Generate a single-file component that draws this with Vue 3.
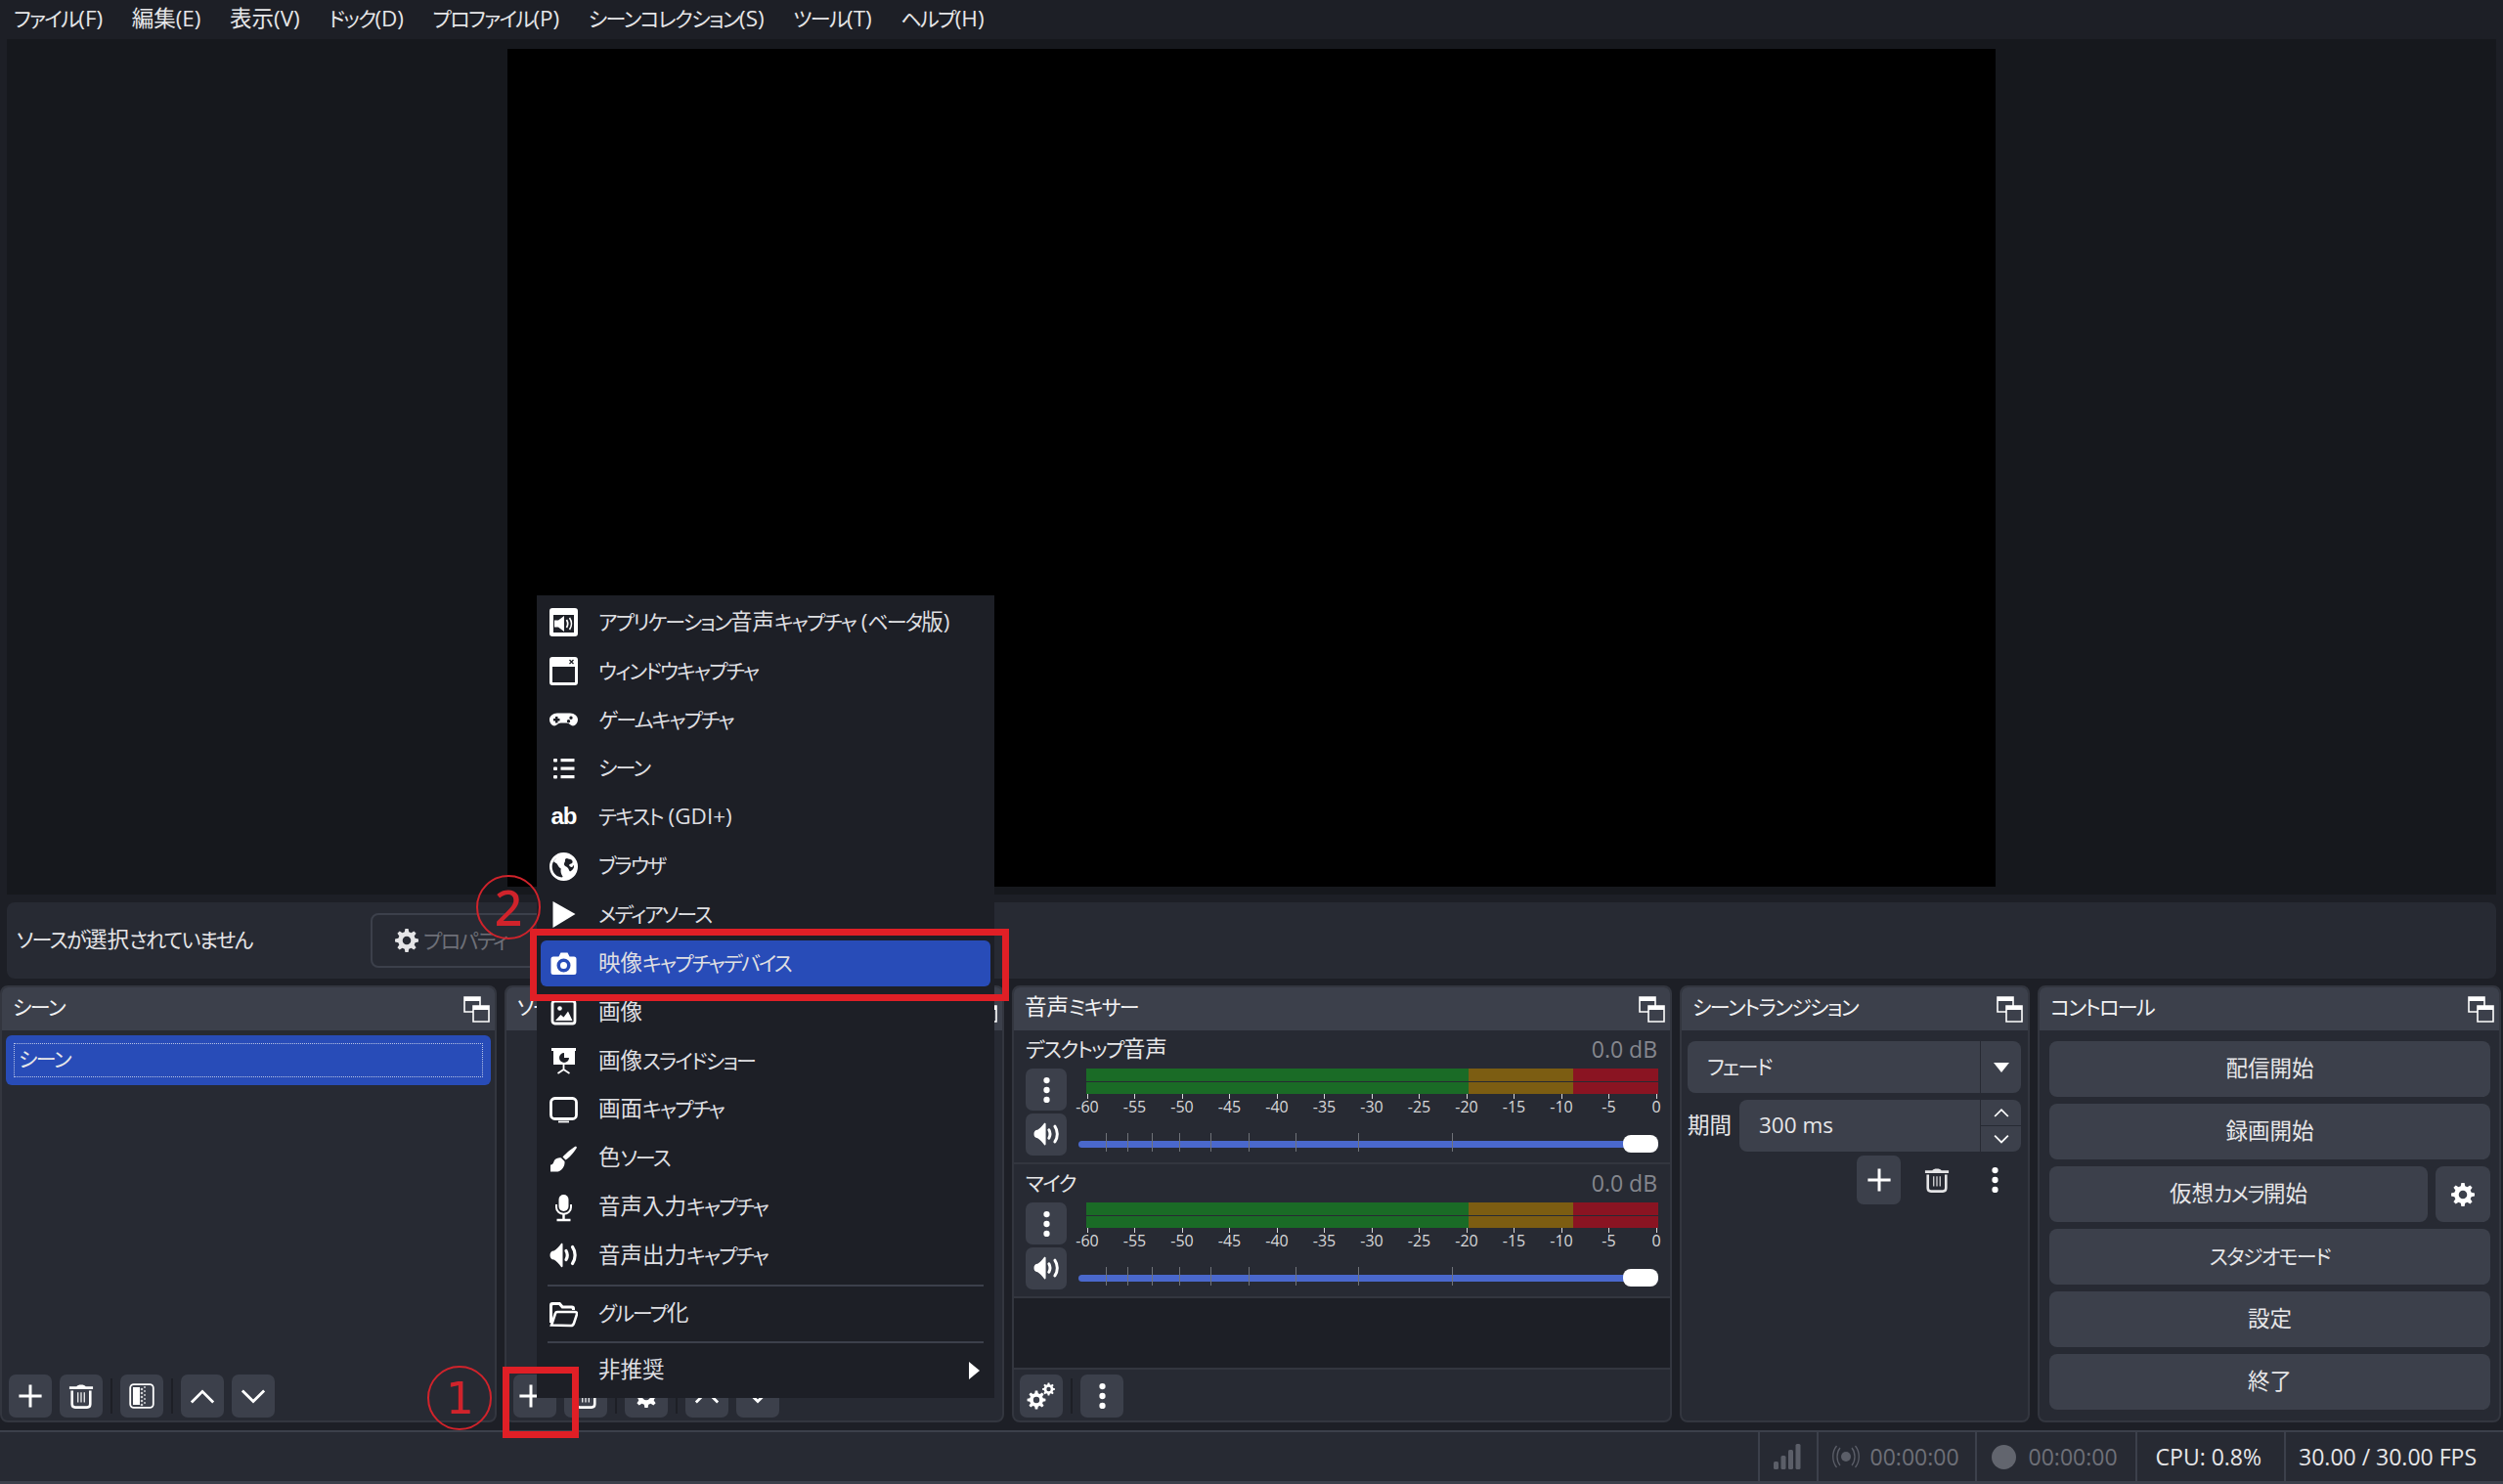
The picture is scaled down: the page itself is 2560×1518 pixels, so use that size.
<script setup>
import { h } from 'vue'

const menuBar = ['ファイル(F)', '編集(E)', '表示(V)', 'ドック(D)', 'プロファイル(P)', 'シーンコレクション(S)', 'ツール(T)', 'ヘルプ(H)']

const sourceItems = [
  { icon: 'appaudio', label: 'アプリケーション音声キャプチャ (ベータ版)' },
  { icon: 'window', label: 'ウィンドウキャプチャ' },
  { icon: 'gamepad', label: 'ゲームキャプチャ' },
  { icon: 'list', label: 'シーン' },
  { icon: 'text', label: 'テキスト (GDI+)' },
  { icon: 'globe', label: 'ブラウザ' },
  { icon: 'play', label: 'メディアソース' },
  { icon: 'camera', label: '映像キャプチャデバイス', active: true },
  { icon: 'image', label: '画像' },
  { icon: 'slides', label: '画像スライドショー' },
  { icon: 'monitor', label: '画面キャプチャ' },
  { icon: 'brush', label: '色ソース' },
  { icon: 'mic', label: '音声入力キャプチャ' },
  { icon: 'speaker', label: '音声出力キャプチャ' }
]

const channels = ['デスクトップ音声', 'マイク']
const scale = ['-60', '-55', '-50', '-45', '-40', '-35', '-30', '-25', '-20', '-15', '-10', '-5', '0']
// volume fader ticks, percent of the track
const faderTicks = [4.7, 8.4, 12.6, 17.4, 22.8, 29.4, 37.5, 48.3, 64.5]

// the reference font has narrow kana, so kana runs get their own span
const KANA = /([\u3040-\u30ff]+)/
const Jp = (props) =>
  props.s.split(KANA).filter(Boolean).map((run) => (KANA.test(run) ? h('span', { class: 'kana' }, run) : run))
Jp.props = ['s']

function gear(cx, cy, ro, ri, hole, teeth = 8) {
  const step = (Math.PI * 2) / teeth
  const pt = (a, r) => `${(cx + Math.cos(a) * r).toFixed(2)} ${(cy + Math.sin(a) * r).toFixed(2)}`
  let d = ''
  for (let i = 0; i < teeth; i++) {
    const a = i * step - Math.PI / 2
    d += `${i ? 'L' : 'M'}${pt(a - step * 0.32, ri)}L${pt(a - step * 0.17, ro)}L${pt(a + step * 0.17, ro)}L${pt(a + step * 0.32, ri)}`
  }
  d += `Z M${cx - hole} ${cy}a${hole} ${hole} 0 1 0 ${hole * 2} 0a${hole} ${hole} 0 1 0 ${-hole * 2} 0Z`
  return d
}
const gearPath = gear(14, 14, 13, 9.6, 4.6)
const gearsPath = gear(10, 18, 9.5, 7, 3.2) + gear(22.5, 7, 6.5, 4.8, 2.2)
</script>

<template>
  <svg class="defs" aria-hidden="true">
    <symbol id="float" viewBox="0 0 27 27">
      <path d="M1 1h16v15H1z" fill="none" stroke="currentColor" stroke-width="1.6" />
      <path d="M1 1h16v4H1z" fill="currentColor" />
      <path d="M10 10h16v16H10z" fill="#3c404b" stroke="currentColor" stroke-width="1.6" />
      <path d="M10 10h16v4H10z" fill="currentColor" />
    </symbol>
    <symbol id="plus" viewBox="0 0 28 28">
      <path d="M14 1.5v25M1.5 14h25" stroke="currentColor" stroke-width="3.2" />
    </symbol>
    <symbol id="trash" viewBox="0 0 28 28">
      <path d="M1 3.5h8c1-2.5 9-2.500 10 0h8v3H1z" fill="currentColor" />
      <path d="M4 8v15c0 2 1.500 3.500 3.500 3.500h13c2 0 3.500-1.500 3.500-3.500V8" fill="none" stroke="currentColor" stroke-width="2.800" />
      <path d="M10.500 10v11M14 10v11M17.500 10v11" stroke="currentColor" stroke-width="1.300" />
    </symbol>
    <symbol id="filter" viewBox="0 0 26 26">
      <rect x="1.200" y="1.200" width="23.600" height="23.600" rx="3.500" fill="none" stroke="currentColor" stroke-width="1.800" />
      <path d="M4 4h7v18H4z" fill="currentColor" />
      <g fill="currentColor" opacity=".75">
        <circle cx="13" cy="6" r="1.300" /><circle cx="13" cy="10" r="1.300" /><circle cx="13" cy="14" r="1.300" /><circle cx="13" cy="18" r="1.300" /><circle cx="13" cy="22" r="1.300" />
        <circle cx="16" cy="4" r="1" /><circle cx="16" cy="8" r="1" /><circle cx="16" cy="12" r="1" /><circle cx="16" cy="16" r="1" /><circle cx="16" cy="20" r="1" />
      </g>
    </symbol>
    <symbol id="up" viewBox="0 0 28 28"><path d="M2 21L14 9l12 12" fill="none" stroke="currentColor" stroke-width="3" /></symbol>
    <symbol id="down" viewBox="0 0 28 28"><path d="M2 8l12 12L26 8" fill="none" stroke="currentColor" stroke-width="3" /></symbol>
    <symbol id="gear" viewBox="0 0 28 28"><path :d="gearPath" fill="currentColor" fill-rule="evenodd" /></symbol>
    <symbol id="gears" viewBox="0 0 30 28"><path :d="gearsPath" fill="currentColor" fill-rule="evenodd" /></symbol>
    <symbol id="dots" viewBox="0 0 10 30">
      <circle cx="5" cy="4" r="3.500" fill="currentColor" /><circle cx="5" cy="15" r="3.500" fill="currentColor" /><circle cx="5" cy="26" r="3.500" fill="currentColor" />
    </symbol>

    <symbol id="appaudio" viewBox="0 0 29 29">
      <path fill="currentColor" fill-rule="evenodd" d="M3 0h23a3 3 0 0 1 3 3v23a3 3 0 0 1-3 3H3a3 3 0 0 1-3-3V3a3 3 0 0 1 3-3zM4 7v18h21V7z" />
      <path fill="currentColor" d="M5 12.500h4l6-4.500v16l-6-4.500H5z" />
      <path d="M17.500 12c1.500 2.500 1.500 5.500 0 8M20.500 10c2.500 3.500 2.500 8.500 0 12" fill="none" stroke="currentColor" stroke-width="1.700" />
    </symbol>
    <symbol id="window" viewBox="0 0 29 29">
      <path fill="currentColor" fill-rule="evenodd" d="M3 0h23a3 3 0 0 1 3 3v23a3 3 0 0 1-3 3H3a3 3 0 0 1-3-3V3a3 3 0 0 1 3-3zM3 10v16h23V10z" />
      <path d="M20.500 3l4 4M24.500 3l-4 4" stroke="#1d1f26" stroke-width="1.300" />
    </symbol>
    <symbol id="gamepad" viewBox="0 0 29 29">
      <path fill="currentColor" fill-rule="evenodd" d="M8 7.500h13c4.500 0 8 3 8 6.500 0 3.500-2.500 6.500-5 6.500s-3.500-3-6.500-3h-6c-3 0-4 3-6.500 3S0 17.500 0 14c0-3.500 3.500-6.500 8-6.500zM6 11v2H4v2.500h2v2h2.500v-2h2V13h-2v-2zM22 10.500a1.700 1.700 0 1 0 0 3.400a1.700 1.700 0 1 0 0-3.400zM19.500 14a1.700 1.700 0 1 0 0 3.400a1.700 1.700 0 1 0 0-3.400z" />
    </symbol>
    <symbol id="list" viewBox="0 0 29 29">
      <g fill="currentColor">
        <rect x="4" y="4" width="4" height="3.500" rx="1" /><rect x="4" y="12.500" width="4" height="3.500" rx="1" /><rect x="4" y="21" width="4" height="3.500" rx="1" />
        <rect x="11.500" y="4" width="14" height="3.200" /><rect x="11.500" y="12.500" width="14" height="3.200" /><rect x="11.500" y="21" width="14" height="3.200" />
      </g>
    </symbol>
    <symbol id="globe" viewBox="0 0 29 29">
      <path fill="currentColor" fill-rule="evenodd" d="M14.500 0a14.500 14.500 0 1 0 0 29a14.500 14.500 0 1 0 0-29zM11 3.500c-3 1-5.500 3-6.800 6 1.500 1 3 1 4 3 1 2 2 3 3.500 4-.5 3 0 5.500 2 8.500-1 .5-2 .5-3 0-5-1-8-5.500-8-10.500 0-5 3.500-9.500 8.300-11zM18 6c1.500 1 3 .5 4.500 1.500 1.200 1 1.500 2.500.5 3.500-1 1-2.500.5-3 2 1 2 3.500 3 4 .5.500-1.500 1 .5 1 1.500-.5 2-2.500 3.500-4 4.500-1.500-1-1-3-2.500-4-1-1.500-3-1-3.500-3-.5-2 1.500-3 1-4.500-.5-1 .5-2 2-2z" />
    </symbol>
    <symbol id="play" viewBox="0 0 29 29"><path fill="currentColor" d="M3.500 1l23 13-23 14z" /></symbol>
    <symbol id="camera" viewBox="0 0 29 29">
      <path fill="currentColor" fill-rule="evenodd" d="M4 7.500h5.500l2-4h7l2 4H25a2.500 2.500 0 0 1 2.500 2.500v13.500A2.500 2.500 0 0 1 25 26H4a2.500 2.500 0 0 1-2.500-2.500V10A2.500 2.500 0 0 1 4 7.500zM14.500 9.500a7 7 0 1 0 0 14a7 7 0 1 0 0-14zM14.500 13a3.500 3.500 0 1 0 0 7a3.500 3.500 0 1 0 0-7z" />
    </symbol>
    <symbol id="image" viewBox="0 0 29 29">
      <rect x="3" y="3" width="23" height="23" rx="2.500" fill="none" stroke="currentColor" stroke-width="2.800" />
      <circle cx="10.500" cy="10.500" r="2.300" fill="currentColor" />
      <path fill="currentColor" d="M6 23l5.500-6 3 2.500 4.500-6 4.500 9.500z" />
    </symbol>
    <symbol id="slides" viewBox="0 0 29 29">
      <path fill="currentColor" fill-rule="evenodd" d="M2 1h25v3h-1v14H4V4H2zM15 6a5 5 0 1 0 5 5h-5z" />
      <path fill="currentColor" d="M16 6v4h4a4 4 0 0 0-4-4z" />
      <path d="M14.500 18v5M14.500 23l-6 4M14.500 23l6 4" stroke="currentColor" stroke-width="1.800" fill="none" />
    </symbol>
    <symbol id="monitor" viewBox="0 0 29 29">
      <rect x="1.500" y="2.500" width="26" height="21" rx="4" fill="none" stroke="currentColor" stroke-width="2.800" />
      <path d="M9 26.500h11" stroke="currentColor" stroke-width="1.800" />
    </symbol>
    <symbol id="brush" viewBox="0 0 29 29">
      <path fill="currentColor" d="M27 1.500l1 1.200c-2 3.500-6.500 9.500-11.500 12.800l-3-3C17.500 8 23 3.500 27 1.500z" />
      <path fill="currentColor" d="M12 13.500l3.500 3.500c.5 4.500-2.500 9.500-7 10.500H1v-7c3 0 3-2.500 4-4.500 1.500-2 4.500-3 7-2.500z" />
    </symbol>
    <symbol id="mic" viewBox="0 0 29 29">
      <rect x="9.500" y="1" width="10" height="17" rx="5" fill="currentColor" />
      <path d="M7 11v3c0 9 15 9 15 0v-3" fill="none" stroke="currentColor" stroke-width="2" />
      <path d="M14.500 21v5M7.500 27h14" stroke="currentColor" stroke-width="2.400" />
    </symbol>
    <symbol id="speaker" viewBox="0 0 29 29">
      <path fill="currentColor" d="M.5 14c0-2.500 1.500-4.500 4-4.500 2.500-1.500 5-4 7.500-7.500 1-.5 1.500 0 1.500 1v22c0 1-.5 1.500-1.500 1-2.500-3.500-5-6-7.500-7.500-2.500 0-4-2-4-4.500z" />
      <path d="M17 9.500c1.700 3 1.700 6 0 9M23.500 5.500c3.500 5 3.500 12 0 17" fill="none" stroke="currentColor" stroke-width="3.200" stroke-linecap="round" />
    </symbol>
    <symbol id="folder" viewBox="0 0 29 29">
      <path fill="currentColor" fill-rule="evenodd" d="M3 3h8l3 3.500h9a3 3 0 0 1 3 3v1.500h-3v-.5a1 1 0 0 0-1-1h-9.500l-3-3.500H4a1 1 0 0 0-1 1v17h-3V6a3 3 0 0 1 3-3z" />
      <path d="M2 26.500l4-12c.3-1 1-1.500 2-1.500h18c1.500 0 2.500 1 2 2.500l-3 9c-.5 1.500-1.500 2.500-3 2.500z" fill="none" stroke="currentColor" stroke-width="2.600" />
    </symbol>
    <symbol id="signal" viewBox="0 0 28 26">
      <g fill="currentColor">
        <rect x="0" y="18" width="5" height="8" rx="1.500" /><rect x="7.500" y="12" width="5" height="14" rx="1.500" /><rect x="15" y="6" width="5" height="20" rx="1.500" /><rect x="22.500" y="0" width="5" height="26" rx="1.500" />
      </g>
    </symbol>
    <symbol id="live" viewBox="0 0 28 26">
      <circle cx="14" cy="13" r="5" fill="currentColor" />
      <path d="M8 4c-4 5-4 13 0 18M20 4c4 5 4 13 0 18M4.500 2c-5 6-5 16 0 22M23.500 2c5 6 5 16 0 22" fill="none" stroke="currentColor" stroke-width="1.300" />
    </symbol>
  </svg>

  <div class="obs">
    <nav class="menubar">
      <span v-for="item in menuBar" :key="item" class="menubar__item"><Jp :s="item" /></span>
    </nav>

    <section class="preview">
      <div class="preview__canvas"></div>
    </section>

    <section class="context">
      <span class="context__label"><Jp s="ソースが選択されていません" /></span>
      <button class="context__button">
        <svg class="ic-gear"><use href="#gear" /></svg>
        <span><Jp s="プロパティ" /></span>
      </button>
    </section>

    <section class="docks">
      <div class="dock dock--scenes">
        <header class="dock__head">
          <span><Jp s="シーン" /></span>
          <svg class="float"><use href="#float" /></svg>
        </header>
        <div class="scene-list">
          <div class="scene-row"><div class="scene-row__focus"><Jp s="シーン" /></div></div>
        </div>
        <div class="toolbar">
          <button class="tool"><svg class="ic"><use href="#plus" /></svg></button>
          <button class="tool"><svg class="ic"><use href="#trash" /></svg></button>
          <i class="toolbar__sep"></i>
          <button class="tool"><svg class="ic"><use href="#filter" /></svg></button>
          <i class="toolbar__sep"></i>
          <button class="tool"><svg class="ic"><use href="#up" /></svg></button>
          <button class="tool"><svg class="ic"><use href="#down" /></svg></button>
        </div>
      </div>

      <div class="dock dock--sources">
        <header class="dock__head">
          <span><Jp s="ソース" /></span>
          <svg class="float"><use href="#float" /></svg>
        </header>
        <div class="scene-list"></div>
        <div class="toolbar">
          <button class="tool"><svg class="ic ic--nudged"><use href="#plus" /></svg></button>
          <button class="tool"><svg class="ic"><use href="#trash" /></svg></button>
          <i class="toolbar__sep"></i>
          <button class="tool"><svg class="ic"><use href="#gear" /></svg></button>
          <i class="toolbar__sep"></i>
          <button class="tool"><svg class="ic"><use href="#up" /></svg></button>
          <button class="tool"><svg class="ic"><use href="#down" /></svg></button>
        </div>
      </div>

      <div class="dock dock--mixer">
        <header class="dock__head">
          <span><Jp s="音声ミキサー" /></span>
          <svg class="float"><use href="#float" /></svg>
        </header>
        <div v-for="name in channels" :key="name" class="channel">
          <div class="channel__top">
            <span><Jp :s="name" /></span>
            <span class="channel__db">0.0 dB</span>
          </div>
          <div class="channel__body">
            <div class="channel__buttons">
              <button class="tool tool--slim"><svg class="ic-dots"><use href="#dots" /></svg></button>
              <button class="tool tool--slim"><svg class="ic-spk"><use href="#speaker" /></svg></button>
            </div>
            <div class="channel__meters">
              <div class="meter"><i></i><i></i></div>
              <div class="scale">
                <div v-for="mark in scale" :key="mark" class="scale__mark">
                  <i></i>
                  <span>{{ mark }}</span>
                </div>
              </div>
              <div class="fader">
                <i v-for="t in faderTicks" :key="t" class="fader__tick" :style="{ left: t + '%' }"></i>
                <i class="fader__thumb"></i>
              </div>
            </div>
          </div>
        </div>
        <div class="mixer-empty"></div>
        <div class="toolbar toolbar--mixer">
          <button class="tool"><svg class="ic-gears"><use href="#gears" /></svg></button>
          <i class="toolbar__sep"></i>
          <button class="tool"><svg class="ic-dots"><use href="#dots" /></svg></button>
        </div>
      </div>

      <div class="dock dock--transition">
        <header class="dock__head">
          <span><Jp s="シーントランジション" /></span>
          <svg class="float"><use href="#float" /></svg>
        </header>
        <div class="transition">
          <div class="combo">
            <span class="combo__value"><Jp s="フェード" /></span>
            <span class="combo__arrow"><i class="triangle"></i></span>
          </div>
          <div class="duration">
            <span class="duration__label">期間</span>
            <div class="combo combo--spin">
              <span class="combo__value">300 ms</span>
              <span class="spin">
                <span><svg class="ic-spin"><use href="#up" /></svg></span>
                <span><svg class="ic-spin"><use href="#down" /></svg></span>
              </span>
            </div>
          </div>
          <div class="transition__tools">
            <button class="tool tool--tall"><svg class="ic"><use href="#plus" /></svg></button>
            <span class="plain"><svg class="ic-trash"><use href="#trash" /></svg></span>
            <span class="plain"><svg class="ic-dots"><use href="#dots" /></svg></span>
          </div>
        </div>
      </div>

      <div class="dock dock--controls">
        <header class="dock__head">
          <span><Jp s="コントロール" /></span>
          <svg class="float"><use href="#float" /></svg>
        </header>
        <div class="controls">
          <button class="ctrl">配信開始</button>
          <button class="ctrl">録画開始</button>
          <div class="controls__row">
            <button class="ctrl"><Jp s="仮想カメラ開始" /></button>
            <button class="ctrl ctrl--icon"><svg class="ic-gear ic-gear--white"><use href="#gear" /></svg></button>
          </div>
          <button class="ctrl"><Jp s="スタジオモード" /></button>
          <button class="ctrl">設定</button>
          <button class="ctrl">終了</button>
        </div>
      </div>
    </section>

    <footer class="status">
      <div class="status__cell status__cell--signal"><svg class="ic-signal"><use href="#signal" /></svg></div>
      <div class="status__cell status__cell--time">
        <svg class="ic-signal"><use href="#live" /></svg>
        <span>00:00:00</span>
      </div>
      <div class="status__cell status__cell--rec">
        <i class="rec-dot"></i>
        <span>00:00:00</span>
      </div>
      <div class="status__cell status__cell--cpu">CPU: 0.8%</div>
      <div class="status__cell status__cell--fps">30.00 / 30.00 FPS</div>
    </footer>

    <!-- add-source popup -->
    <div class="popup">
      <div v-for="item in sourceItems" :key="item.label" class="popup__item" :class="{ 'popup__item--active': item.active }">
        <span v-if="item.icon === 'text'" class="popup__ab">ab</span>
        <svg v-else class="popup__icon"><use :href="'#' + item.icon" /></svg>
        <span class="popup__label"><Jp :s="item.label" /></span>
      </div>
      <div class="popup__sep"></div>
      <div class="popup__item">
        <svg class="popup__icon"><use href="#folder" /></svg>
        <span class="popup__label"><Jp s="グループ化" /></span>
      </div>
      <div class="popup__sep"></div>
      <div class="popup__item">
        <span class="popup__blank"></span>
        <span class="popup__label">非推奨</span>
        <i class="popup__more"></i>
      </div>
    </div>

    <!-- red annotations drawn over the screenshot -->
    <div class="mark mark--item"></div>
    <div class="mark mark--plus"></div>
    <div class="circled circled--one">1</div>
    <div class="circled circled--two">2</div>
  </div>
</template>

<style>
html, body {
  margin: 0;
  background: #1d1f26;
}

.kana {
  font-size: 21px;
  letter-spacing: -1.6px;
}

.popup__label .kana {
  letter-spacing: -1.850px;
}
</style>

<style scoped>
.defs {
  position: absolute;
  width: 0;
  height: 0;
}

.obs {
  position: relative;
  display: flex;
  flex-direction: column;
  width: 2560px;
  height: 1518px;
  overflow: hidden;
  background: #1d1f26;
  color: #e6e6e8;
  font-family: "Open Sans", "Noto Sans CJK JP", sans-serif;
  font-size: 22.500px;
  font-feature-settings: "palt";
  line-height: 30px;
}

button {
  font: inherit;
  font-feature-settings: inherit;
  color: inherit;
  border: none;
  padding: 0;
}

/* top */
.menubar {
  display: flex;
  align-items: center;
  gap: 29.500px;
  height: 40px;
  padding: 0 0 3px 14px;
  box-sizing: border-box;
  flex: none;
}

.preview {
  display: flex;
  justify-content: center;
  flex: none;
  height: 875px;
  margin: 0 7px;
  padding: 10px 0 8px;
  box-sizing: border-box;
  background: #16181d;
}

.preview__canvas {
  width: 1522px;
  background: #000;
}

.context {
  display: flex;
  align-items: center;
  flex: none;
  height: 78px;
  margin: 8px 7px 7px;
  padding: 0 0 0 10px;
  box-sizing: border-box;
  background: #272a33;
  border-radius: 8px;
}

.context__label {
  width: 362px;
  padding-bottom: 3px;
}

.context__button {
  display: flex;
  align-items: center;
  gap: 4px;
  width: 190px;
  height: 56px;
  padding-left: 22px;
  box-sizing: border-box;
  background: transparent;
  border: 2px solid #3c404b;
  border-radius: 8px;
  color: #6e7078;
}

.ic-gear {
  width: 26px;
  height: 26px;
  color: #e4e4e6;
}

.ic-gear--white {
  width: 26px;
  height: 28px;
  color: #fff;
}

/* docks */
.docks {
  display: flex;
  gap: 8px;
  flex: none;
  height: 447px;
}

.dock {
  display: flex;
  flex-direction: column;
  box-sizing: border-box;
  border: 2px solid #33363f;
  border-radius: 8px;
  background: #272a33;
  overflow: hidden;
}

.dock--scenes { width: 508px; }
.dock--sources { width: 511px; }
.dock--mixer { width: 675px; }
.dock--transition { width: 358px; }
.dock--controls { width: 474px; }

.dock__head {
  display: flex;
  align-items: center;
  justify-content: space-between;
  flex: none;
  height: 44px;
  padding: 0 5px 0 11px;
  background: #3c404b;
  color: #f2f2f3;
}

.dock__head > span {
  padding-bottom: 4px;
}

.float {
  width: 27px;
  height: 27px;
  color: #fff;
}

.scene-list {
  flex: 1;
  padding: 5px 4px;
}

.scene-row {
  height: 51px;
  padding: 8px;
  box-sizing: border-box;
  background: #284cb8;
  border-radius: 6px;
}

.scene-row__focus {
  display: flex;
  align-items: center;
  height: 100%;
  padding: 0 0 3px 4px;
  box-sizing: border-box;
  border: 1px dotted #b9c4e6;
}

.toolbar {
  display: flex;
  align-items: center;
  gap: 8px;
  flex: none;
  padding: 0 7px 3px;
}

.toolbar__sep {
  width: 2px;
  height: 36px;
  background: #1d1f26;
}

.tool {
  display: flex;
  align-items: center;
  justify-content: center;
  width: 44px;
  height: 44px;
  background: #3c404b;
  border-radius: 7px;
  color: #fff;
}

.tool--slim {
  width: 42px;
  height: 43px;
}

.tool--tall {
  width: 45px;
  height: 50px;
}

.ic {
  width: 26px;
  height: 26px;
}

.ic--nudged {
  margin-right: 9px;
}

.ic-dots {
  width: 9px;
  height: 28px;
  color: #fff;
}

.ic-spk {
  width: 29px;
  height: 27px;
}

.ic-gears {
  width: 30px;
  height: 28px;
}

/* mixer */
.channel {
  flex: none;
  height: 137px;
  padding: 0 12px;
  box-sizing: border-box;
  border-bottom: 2px solid #33363f;
}

.channel__top {
  display: flex;
  align-items: center;
  justify-content: space-between;
  height: 39px;
  padding: 0 1px 2px 0;
  box-sizing: border-box;
}

.channel__db {
  color: #85878e;
  font-size: 23px;
}

.channel__body {
  display: flex;
  gap: 12px;
}

.channel__buttons {
  display: flex;
  flex-direction: column;
  gap: 3px;
}

.channel__meters {
  flex: 1;
  display: flex;
  flex-direction: column;
}

.meter {
  display: flex;
  flex-direction: column;
  gap: 1px;
  margin-left: 8px;
}

.meter i {
  display: block;
  height: 12.500px;
  background: linear-gradient(to right, #1a6b26 0 66.900%, #7c5d12 66.900% 85.100%, #8a1422 85.100% 100%);
}

.scale {
  display: flex;
  justify-content: space-between;
  margin-left: 8px;
  height: 30px;
  padding-right: 1px;
}

.scale__mark {
  display: flex;
  flex-direction: column;
  align-items: center;
  width: 2px;
  font-size: 16px;
  line-height: 22px;
  color: #d8d8da;
  white-space: nowrap;
}

.scale__mark i {
  flex: none;
  width: 1px;
  height: 5px;
  margin-bottom: -3px;
  background: #d8d8da;
}

.fader {
  position: relative;
  height: 7px;
  margin-top: 18px;
  background: #4a68cc;
  border-radius: 4px;
}

.fader__tick {
  position: absolute;
  top: -8px;
  width: 1px;
  height: 19px;
  background: #6f7278;
}

.fader__thumb {
  position: absolute;
  right: 0;
  top: -6px;
  width: 36px;
  height: 18px;
  background: #fff;
  border-radius: 8px;
}

.mixer-empty {
  flex: 1;
  background: #1d1f26;
  border-bottom: 2px solid #33363f;
}

.toolbar--mixer {
  padding: 5px 6px 3px;
}

/* transitions */
.transition {
  display: flex;
  flex-direction: column;
  padding: 11px 7px 0 6px;
}

.combo {
  display: flex;
  align-items: center;
  justify-content: space-between;
  height: 53px;
  background: #3c404b;
  border-radius: 8px;
}

.combo__value {
  padding: 0 0 2px 20px;
}

.combo__arrow {
  display: flex;
  align-items: center;
  justify-content: center;
  width: 41px;
  height: 100%;
  border-left: 1px solid #272a33;
}

.triangle {
  border-left: 8px solid transparent;
  border-right: 8px solid transparent;
  border-top: 10px solid #fff;
}

.duration {
  display: flex;
  align-items: center;
  justify-content: space-between;
  margin-top: 7px;
}

.duration__label {
  padding-bottom: 2px;
}

.combo--spin {
  width: 288px;
}

.spin {
  display: flex;
  flex-direction: column;
  width: 41px;
  height: 100%;
  border-left: 1px solid #272a33;
}

.spin span {
  flex: 1;
  display: flex;
  align-items: center;
  justify-content: center;
}

.spin span:first-child {
  border-bottom: 1px solid #272a33;
}

.ic-spin {
  width: 16px;
  height: 16px;
  color: #fff;
}

.transition__tools {
  display: flex;
  justify-content: flex-end;
  gap: 15px;
  margin-top: 4px;
  padding-right: 5px;
}

.plain {
  display: flex;
  align-items: center;
  justify-content: center;
  width: 44px;
  height: 50px;
}

.ic-trash {
  width: 26px;
  height: 28px;
  color: #e4e4e6;
}

/* controls */
.controls {
  display: flex;
  flex-direction: column;
  gap: 7px;
  padding: 11px 9px 0 10px;
}

.controls__row {
  display: flex;
  gap: 8px;
}

.ctrl {
  height: 57px;
  padding-bottom: 2px;
  background: #3c404b;
  border-radius: 8px;
  color: #e6e6e8;
}

.controls__row .ctrl {
  flex: 1;
}

.controls__row .ctrl--icon {
  flex: none;
  width: 56px;
  padding: 0;
  display: flex;
  align-items: center;
  justify-content: center;
}

/* status bar */
.status {
  display: flex;
  justify-content: flex-end;
  flex: none;
  height: 55px;
  margin-top: 8px;
  box-sizing: border-box;
  background: #272a33;
  border-top: 2px solid #3c404b;
  border-bottom: 3px solid #3c404b;
  font-size: 23px;
}

.status__cell {
  display: flex;
  align-items: center;
  border-left: 2px solid #3c404b;
  white-space: nowrap;
}

.status__cell--signal { padding: 0 16px 0 14px; color: #5b5e68; }
.status__cell--time { gap: 11px; padding: 0 16px 0 14px; color: #6e7078; }
.status__cell--rec { gap: 13px; padding: 0 18px 0 15px; color: #6e7078; }
.status__cell--cpu { padding: 0 23px 0 19px; }
.status__cell--fps { padding: 0 27px 0 13px; }

.ic-signal {
  width: 28px;
  height: 26px;
  color: #5b5e68;
}

.rec-dot {
  width: 25px;
  height: 25px;
  border-radius: 50%;
  background: #62656e;
}

/* add source popup */
.popup {
  position: absolute;
  left: 549px;
  top: 609px;
  z-index: 2;
  width: 468px;
  padding: 4.500px 0 1.500px;
  box-sizing: border-box;
  background: #1d1f26;
}

.popup__item {
  display: flex;
  align-items: center;
  gap: 21px;
  height: 46.850px;
  margin: 0 4px 3px;
  padding-left: 9px;
  border-radius: 6px;
  color: #dfdfe2;
  white-space: nowrap;
}

.popup__label {
  padding-bottom: 2px;
}

.popup__item--active {
  background: #284cb8;
}

.popup__icon,
.popup__blank {
  flex: none;
  width: 29px;
  height: 29px;
  color: #fff;
}

.popup__ab {
  flex: none;
  width: 29px;
  padding-bottom: 3px;
  text-align: center;
  color: #fff;
  font-family: "Liberation Sans", sans-serif;
  font-size: 24px;
  font-weight: 700;
  letter-spacing: -1px;
  line-height: 29px;
}

.popup__sep {
  height: 2px;
  margin: 5.300px 11px 4.500px;
  background: #3c404b;
}

.popup__more {
  margin-left: auto;
  margin-right: 11px;
  border-top: 9px solid transparent;
  border-bottom: 9px solid transparent;
  border-left: 11px solid #fff;
}

/* annotations */
.mark {
  position: absolute;
  z-index: 3;
  box-sizing: border-box;
  border: 7px solid #e01f26;
}

.mark--item {
  left: 542px;
  top: 950px;
  width: 490px;
  height: 74px;
}

.mark--plus {
  left: 514px;
  top: 1398px;
  width: 78px;
  height: 73px;
}

.circled {
  position: absolute;
  z-index: 3;
  display: flex;
  align-items: center;
  justify-content: center;
  box-sizing: border-box;
  width: 66px;
  height: 66px;
  border: 2.500px solid #d0232b;
  border-radius: 50%;
  color: #d0232b;
  font-family: "DejaVu Sans", sans-serif;
  font-size: 45px;
  line-height: 1;
}

.circled--one {
  left: 437px;
  top: 1397px;
}

.circled--two {
  left: 487px;
  top: 895px;
  font-family: "Noto Sans", sans-serif;
  font-size: 50px;
  font-weight: 500;
}
</style>
